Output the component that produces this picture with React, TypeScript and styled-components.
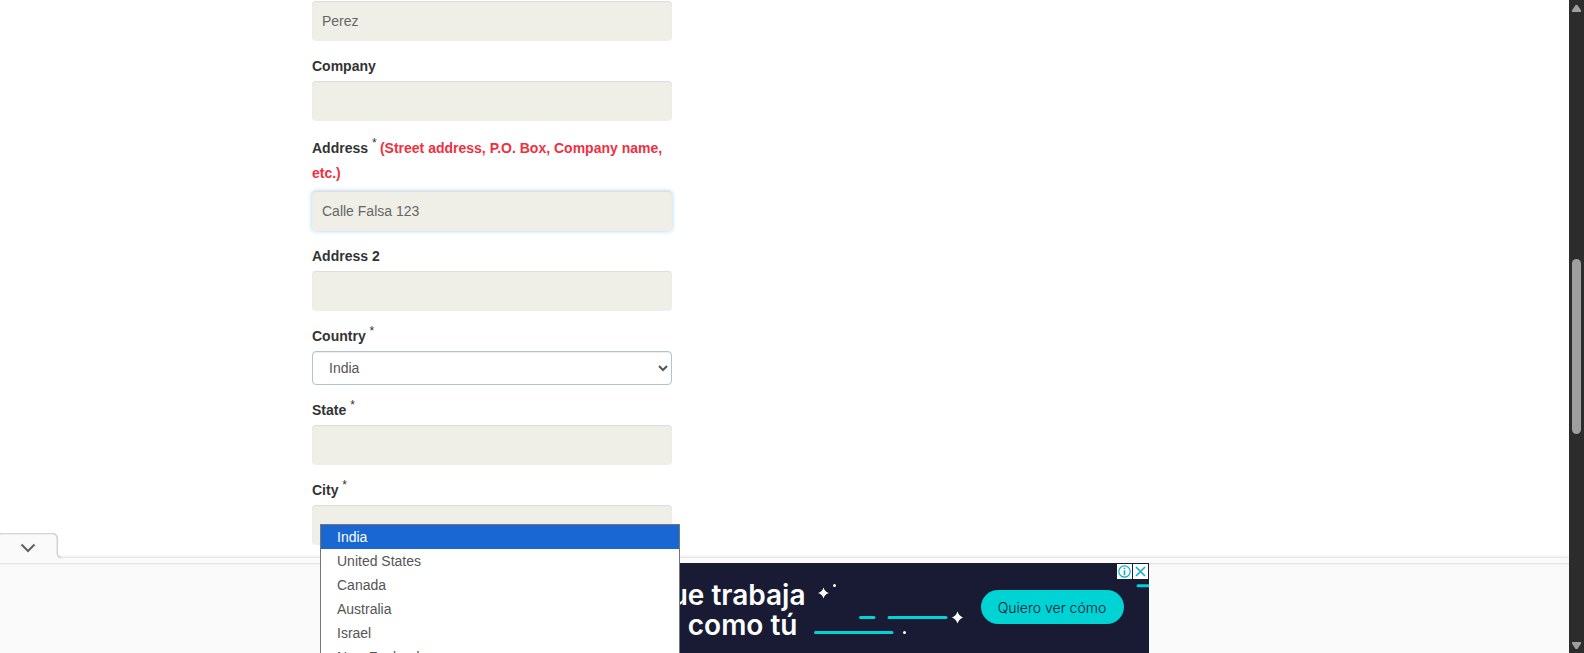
import React from "react";
import styled, { createGlobalStyle } from "styled-components";

const GlobalStyle = createGlobalStyle`
  *, *::before, *::after { box-sizing: border-box; }
  body {
    margin: 0;
    background: #fff;
    color: #333;
    font-family: "Liberation Sans", Arial, sans-serif;
    font-size: 14px;
    line-height: 20px;
  }
`;

const Window = styled.div`
  display: flex;
  height: 100vh;
  overflow: hidden;
`;

const Viewport = styled.div`
  position: relative;
  flex: 1;
  min-width: 0;
  height: 100%;
  overflow: hidden;
`;

const Container = styled.main`
  max-width: 945px;
  margin: 0 auto;
  padding-top: 1px;
`;

const Form = styled.form`
  width: 100%;
  max-width: 360px;
  display: flex;
  flex-direction: column;
  gap: 15px;
`;

const Field = styled.div`
  position: relative;
  display: flex;
  flex-direction: column;
  gap: 5px;
`;

const Label = styled.label<{ $tall?: boolean }>`
  font-weight: 700;
  line-height: ${(p) => (p.$tall ? 25 : 20)}px;
`;

const Required = styled.sup`
  font-size: 12px;
  font-weight: 400;
  line-height: 0;
`;

const Note = styled.span`
  color: #f0303f;
`;

const TextInput = styled.input<{ $active?: boolean }>`
  width: 100%;
  height: 40px;
  padding: 0 10px;
  border: 0;
  border-radius: 4px;
  outline: 0;
  background: #f0efe7;
  color: #666;
  font: inherit;
  box-shadow: inset 0 1px 1px rgba(0, 0, 0, 0.075)
    ${(p) => (p.$active ? ", 0 0 4px rgba(102, 175, 233, 0.6)" : "")};
`;

const Select = styled.select`
  width: 100%;
  height: 34px;
  padding: 6px 12px;
  border: 1px solid #b0c4d4;
  border-radius: 4px;
  background: #fff;
  color: #555;
  font: inherit;
  box-shadow: inset 0 1px 1px rgba(0, 0, 0, 0.075);
`;

const Menu = styled.ul`
  position: absolute;
  z-index: 3;
  top: 198px;
  left: 8px;
  width: 100%;
  margin: 0;
  padding: 0;
  list-style: none;
  border: 1px solid #767676;
  background: #fff;
`;

const MenuItem = styled.li<{ $selected?: boolean }>`
  height: 24px;
  padding: 0 16px;
  line-height: 24px;
  color: ${(p) => (p.$selected ? "#fff" : "#555")};
  background: ${(p) => (p.$selected ? "#1967d2" : "#fff")};
`;

const AnchorBar = styled.aside`
  position: absolute;
  z-index: 2;
  left: 0;
  right: 0;
  bottom: 0;
  display: flex;
  flex-direction: column;
`;

const CollapseButton = styled.button`
  display: block;
  width: 64px;
  height: 28px;
  padding: 0;
  border: 0;
  background: none;

  svg { display: block; }
`;

const Strip = styled.div`
  height: 5px;
  background: #fafafa;
  box-shadow: 0 -1px 3px rgba(0, 0, 0, 0.14);
`;

const AdArea = styled.div`
  position: relative;
  display: flex;
  justify-content: center;
  background: #fafafa;
  box-shadow: inset 0 3px 2px -2px rgba(0, 0, 0, 0.12);
`;

const TabWrap = styled.div`
  position: relative;
  z-index: 1;
  height: 25px;
`;

const Banner = styled.div`
  position: relative;
  width: 728px;
  height: 90px;
  overflow: hidden;
  background: #181b33;
`;

const Artwork = styled.svg`
  position: absolute;
  inset: 0;
`;

const Slogan = styled.p`
  position: absolute;
  top: 17px;
  right: 343px;
  margin: 0;
  display: flex;
  flex-direction: column;
  align-items: flex-end;
  color: #fff;
  font-family: Inter, sans-serif;
  font-size: 28px;
  font-weight: 600;
  line-height: 30px;
  white-space: nowrap;
`;

const SloganEnd = styled.span`
  padding-right: 8px;
`;

const CallToAction = styled.button`
  position: absolute;
  top: 27px;
  right: 25px;
  width: 143px;
  height: 34px;
  padding: 0;
  border: 0;
  border-radius: 17px;
  background: #00d3d3;
  color: #0d1230;
  font-family: Inter, sans-serif;
  font-size: 14px;
  font-weight: 300;
`;

const AdControls = styled.div`
  position: absolute;
  top: 1px;
  right: 1px;
  display: flex;
  gap: 1px;
`;

const AdControl = styled.button`
  width: 15px;
  height: 15px;
  padding: 0;
  border: 0;
  background: #fff;

  svg { display: block; }
`;

const Scrollbar = styled.div`
  display: flex;
  flex-direction: column;
  align-items: center;
  width: 15px;
  height: 100%;
  background: #2c2c2c;

  svg { flex: none; }
`;

const Track = styled.div<{ $grow: number }>`
  flex: ${(p) => p.$grow} 0 0;
`;

const Thumb = styled.div`
  flex: 175 0 0;
  width: 9px;
  border-radius: 5px;
  background: #9f9f9f;
`;

type TextFieldProps = {
  id: string;
  label: string;
  required?: boolean;
  note?: string;
  value?: string;
  active?: boolean;
};

function TextField({ id, label, required, note, value, active }: TextFieldProps) {
  return (
    <Field>
      <Label htmlFor={id} $tall={Boolean(note)}>
        {label}
        {required && <> <Required>* </Required></>}
        {note && <Note>{note}</Note>}
      </Label>
      <TextInput id={id} type="text" defaultValue={value} $active={active} />
    </Field>
  );
}

const countries = ["India", "United States", "Canada", "Australia", "Israel", "New Zealand"];

export default function App() {
  return (
    <>
      <GlobalStyle />
      <Window>
        <Viewport>
          <Container>
            <Form>
              <TextInput type="text" aria-label="Last Name" defaultValue="Perez" />
              <TextField id="company" label="Company" />
              <TextField
                id="address"
                label="Address"
                required
                note="(Street address, P.O. Box, Company name, etc.)"
                value="Calle Falsa 123"
                active
              />
              <TextField id="address2" label="Address 2" />
              <Field>
                <Label htmlFor="country">
                  Country <Required>*</Required>
                </Label>
                <Select id="country" defaultValue="India">
                  {countries.map((c) => (
                    <option key={c}>{c}</option>
                  ))}
                </Select>
                <Menu role="listbox" aria-label="Country">
                  {countries.map((c, i) => (
                    <MenuItem key={c} role="option" aria-selected={i === 0} $selected={i === 0}>
                      {c}
                    </MenuItem>
                  ))}
                </Menu>
              </Field>
              <TextField id="state" label="State" required />
              <TextField id="city" label="City" required />
            </Form>
          </Container>

          <AnchorBar>
            <TabWrap>
              <CollapseButton type="button" aria-label="Collapse ad">
                <svg width="64" height="28" viewBox="0 0 64 28">
                  <path
                    d="M0 1.5Q1 .5 3 .5H51.500Q57 .5 57 6V20Q57 25 62 25V28H0Z"
                    fill="#fafafa"
                  />
                  <path
                    d="M0 1.500Q1 .5 3 .5H51.500Q57.300 .5 57.300 6V20Q57.300 24.500 61.500 24.500"
                    fill="none"
                    stroke="#d4d4d4"
                    strokeWidth="1.600"
                  />
                  <path d="M21.500 11.500L28 18L34.500 11.500" fill="none" stroke="#616161" strokeWidth="2" />
                </svg>
              </CollapseButton>
            </TabWrap>
            <Strip />
            <AdArea>
              <Banner>
                <Artwork width="728" height="90" viewBox="0 0 728 90" aria-hidden="true">
                  <g stroke="#00d3d3" strokeWidth="3" strokeLinecap="round">
                    <path d="M439.500 54.500H453M468 54.500H525M394.500 69.500H471M717 22.800H730" />
                  </g>
                  <g fill="#fff">
                    <path d="M402.500 24.500Q403.700 28.800 408 30Q403.700 31.200 402.500 35.500Q401.300 31.200 397 30Q401.300 28.800 402.500 24.500Z" />
                    <path d="M536.500 48.500Q538 53 542 54.500Q538 56 536.500 60.500Q535 56 531 54.500Q535 53 536.500 48.500Z" />
                    <circle cx="413.500" cy="22.500" r="1.500" />
                    <circle cx="483.500" cy="69.500" r="1.500" />
                  </g>
                </Artwork>
                <Slogan>
                  <span>ue trabaja</span>
                  <SloganEnd>como tú</SloganEnd>
                </Slogan>
                <CallToAction type="button">Quiero ver cómo</CallToAction>
                <AdControls>
                  <AdControl type="button" aria-label="Ad information">
                    <svg width="15" height="15" viewBox="0 0 15 15">
                      <circle cx="7.500" cy="7.500" r="5.700" fill="none" stroke="#18aecb" strokeWidth="1.200" />
                      <path d="M7.500 3.700V5M7.500 6.200V11.300" stroke="#18aecb" strokeWidth="1.700" />
                    </svg>
                  </AdControl>
                  <AdControl type="button" aria-label="Close ad">
                    <svg width="15" height="15" viewBox="0 0 15 15">
                      <path d="M3 3L12 12M12 3L3 12" stroke="#18aecb" strokeWidth="1.700" />
                    </svg>
                  </AdControl>
                </AdControls>
              </Banner>
            </AdArea>
          </AnchorBar>
        </Viewport>

        <Scrollbar aria-hidden="true">
          <svg width="15" height="16" viewBox="0 0 15 16">
            <path d="M6.500 5H8.500L12 10.500Q12.500 12 11.500 12H3.500Q2.500 12 3 10.500Z" fill="#9f9f9f" />
          </svg>
          <Track $grow={243} />
          <Thumb />
          <Track $grow={203} />
          <svg width="15" height="16" viewBox="0 0 15 16">
            <path d="M3.500 5H11.500Q12.500 5 12 6.500L8.500 12H6.500L3 6.500Q2.500 5 3.500 5Z" fill="#9f9f9f" />
          </svg>
        </Scrollbar>
      </Window>
    </>
  );
}
